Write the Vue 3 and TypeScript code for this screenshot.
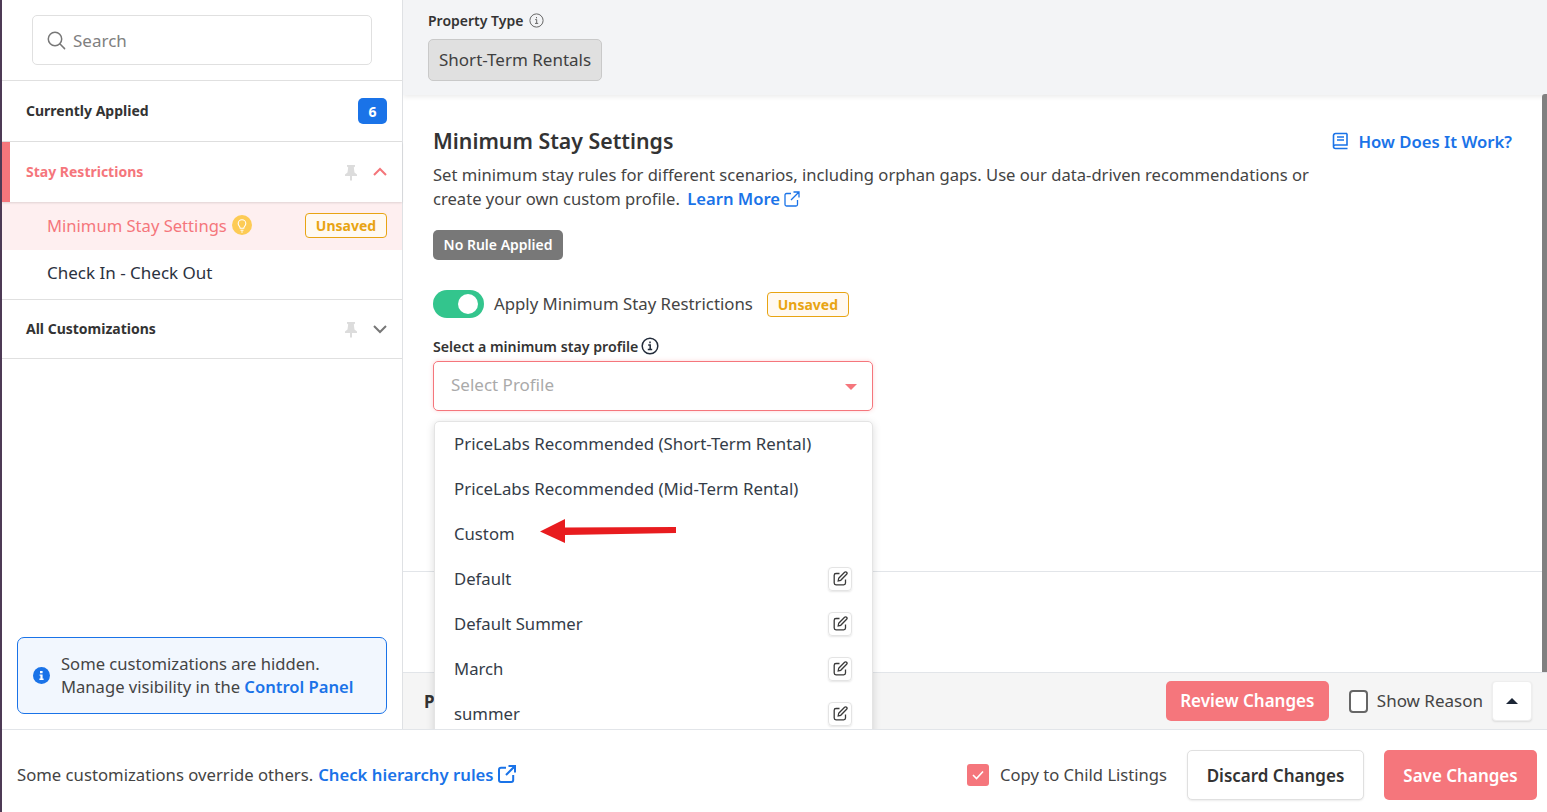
<template>
  <div class="page">
    <div class="top">
      <aside class="sidebar">
        <div class="search-wrap">
          <div class="search">
            <svg width="20" height="20" viewBox="0 0 20 20" fill="none" stroke="#777" stroke-width="1.5"><circle cx="9" cy="9" r="6.7" /><path d="M14 14l4.600 4.600" stroke-linecap="round" /></svg>
            <span>Search</span>
          </div>
        </div>
        <div class="sec applied">
          <span class="sec-title">Currently Applied</span>
          <span class="count">6</span>
        </div>
        <div class="sec stay">
          <span class="sec-title">Stay Restrictions</span>
          <svg class="pin" width="14" height="16" viewBox="0 0 14 16"><path :d="pinPath" fill="#dcdcdc" /></svg>
          <svg class="chev" width="16" height="10" viewBox="0 0 16 10" fill="none" stroke="#f4757a" stroke-width="2"><path d="M2 8l6-6 6 6" /></svg>
        </div>
        <div class="item active">
          <span>Minimum Stay Settings</span>
          <span class="bulb">
            <svg width="14" height="15" viewBox="0 0 14 15" fill="none" stroke="#fff" stroke-width="1.1"><path d="M5.200 10.200c0-1.600-2-2.400-2-4.700a3.800 3.800 0 0 1 7.600 0c0 2.300-2 3.100-2 4.700zM5.500 12.300h3M6.200 14h1.600" /></svg>
          </span>
          <span class="unsaved side">Unsaved</span>
        </div>
        <div class="item check">Check In - Check Out</div>
        <div class="sec all">
          <span class="sec-title">All Customizations</span>
          <svg class="pin" width="14" height="16" viewBox="0 0 14 16"><path :d="pinPath" fill="#dcdcdc" /></svg>
          <svg class="chev" width="16" height="10" viewBox="0 0 16 10" fill="none" stroke="#777" stroke-width="2"><path d="M2 2l6 6 6-6" /></svg>
        </div>
        <div class="spacer"></div>
        <div class="notice">
          <svg width="17" height="17" viewBox="0 0 17 17"><circle cx="8.500" cy="8.500" r="8.500" fill="#1a73e8" /><path d="M7 4h2.600v2.200H7zM6.600 7.400h3v4.200h1v1.400H6.400v-1.400h1v-2.800h-.8z" fill="#fff" /></svg>
          <p>Some customizations are hidden.<br />Manage visibility in the <a>Control Panel</a></p>
        </div>
      </aside>

      <main class="main">
        <div class="prop">
          <div class="prop-label">
            <span>Property Type</span>
            <svg width="15" height="15" viewBox="0 0 15 15" fill="none" stroke="#666"><circle cx="7.500" cy="7.500" r="6.600" /><path d="M6.200 6.600h1.500v3.600M6 10.400h3.200M7.500 4v1.300" /></svg>
          </div>
          <div class="prop-chip">Short-Term Rentals</div>
        </div>

        <div class="content">
          <div class="head">
            <h1>Minimum Stay Settings</h1>
            <a class="how">
              <svg width="17" height="18" viewBox="0 0 17 18" fill="none" stroke="#1a73e8" stroke-width="1.600"><path d="M15 1.500H3.500A2 2 0 0 0 1.500 3.500V14.500A2 2 0 0 0 3.500 16.500H15.500M15 1.500V13H3.500A1.800 1.800 0 0 0 1.500 14.500M5 5h7M5 8h7" /></svg>
              How Does It Work?
            </a>
          </div>
          <p class="desc">
            Set minimum stay rules for different scenarios, including orphan gaps. Use our data-driven recommendations or<br />
            create your own custom profile.&nbsp;<a class="learn">Learn More <svg width="16" height="16" viewBox="0 0 16 16" fill="none" stroke="#1a73e8" stroke-width="1.300"><path d="M7 2.500H2.500A1.500 1.500 0 0 0 1 4v9.500A1.500 1.500 0 0 0 2.500 15H12a1.500 1.500 0 0 0 1.500-1.500V9M9.500 1H15v5.500M15 1L7 9" /></svg></a>
          </p>
          <div class="no-rule">No Rule Applied</div>
          <div class="apply">
            <span class="toggle"><i></i></span>
            <span class="apply-text">Apply Minimum Stay Restrictions</span>
            <span class="unsaved">Unsaved</span>
          </div>
          <div class="select-label">
            Select a minimum stay profile
            <svg width="18" height="18" viewBox="0 0 18 18" fill="none" stroke="#222b3a" stroke-width="1.500"><circle cx="9" cy="9" r="7.800" /><path d="M7.200 8h2v4.400M6.800 12.600h4.400M9 4.500v1.700" /></svg>
          </div>
          <div class="select">
            <span class="placeholder">Select Profile</span>
            <i class="caret"></i>
          </div>
          <div class="divider"></div>
        </div>

        <div class="bar">
          <b class="bar-p">P</b>
          <button class="review">Review Changes</button>
          <label class="reason"><i></i><span>Show Reason</span></label>
          <button class="up"><i></i></button>
        </div>

        <div class="scroll-thumb"></div>

        <ul class="menu">
          <li v-for="opt in options" :key="opt.name">
            <span>{{ opt.name }}</span>
            <span v-if="opt.edit" class="edit">
              <svg width="15" height="15" viewBox="0 0 15 15" fill="none" stroke="#3a3a3a" stroke-width="1.300"><path d="M6.500 2.500H3A1.800 1.800 0 0 0 1.200 4.300V12A1.800 1.800 0 0 0 3 13.800h7.700A1.800 1.800 0 0 0 12.500 12V8.500" /><path d="M5.700 7.200L11.600 1.300a1.200 1.200 0 0 1 2 2L7.700 9.300 5.200 9.800z" /></svg>
            </span>
          </li>
        </ul>

        <svg class="arrow" width="140" height="28" viewBox="0 0 140 28"><path d="M1 13.500L26 1v8.500L137 9v6L26 17v8z" fill="#e81c1f" /></svg>
      </main>
    </div>

    <footer class="footer">
      <p class="note"><span>Some customizations override others.</span><a>Check hierarchy rules</a>
        <svg width="18" height="18" viewBox="0 0 18 18" fill="none" stroke="#1a73e8" stroke-width="2"><path d="M8 2.800H3A2 2 0 0 0 1 4.800V15a2 2 0 0 0 2 2h10.200a2 2 0 0 0 2-2v-5M10.500 1H17v6.500M17 1L8 10" /></svg>
      </p>
      <label class="copy">
        <i><svg width="14" height="12" viewBox="0 0 14 12" fill="none" stroke="#fff" stroke-width="1.600"><path d="M2 6l3.500 3.500L12 2.500" /></svg></i>
        <span>Copy to Child Listings</span>
      </label>
      <button class="discard">Discard Changes</button>
      <button class="save">Save Changes</button>
    </footer>
  </div>
</template>

<script setup lang="ts">
interface ProfileOption {
  name: string
  edit: boolean
}

const pinPath = 'M3 0h8v1.500L9.800 2.500 10.500 7.500 13 9.500V11H8v4l-1 1-1-1v-4H1V9.500l2.500-2L4.200 2.500 3 1.500z'

const options: ProfileOption[] = [
  { name: 'PriceLabs Recommended (Short-Term Rental)', edit: false },
  { name: 'PriceLabs Recommended (Mid-Term Rental)', edit: false },
  { name: 'Custom', edit: false },
  { name: 'Default', edit: true },
  { name: 'Default Summer', edit: true },
  { name: 'March', edit: true },
  { name: 'summer', edit: true }
]
</script>

<style>
html, body {
  margin: 0;
  overflow: hidden;
}
</style>

<style scoped>
.page {
  width: 1547px;
  height: 812px;
  box-sizing: border-box;
  display: flex;
  flex-direction: column;
  font-family: 'Noto Sans', 'Liberation Sans', sans-serif;
  color: #333;
  background: #fff;
  overflow: hidden;
  border-left: 2px solid #c2188b;
  border-image: linear-gradient(90deg, #4d3a55 50%, #c2188b 50%) 1;
}

.top {
  height: 730px;
  flex: none;
  display: flex;
  border-bottom: 1px solid #e2e5e9;
  box-sizing: border-box;
}

.sidebar {
  width: 400px;
  flex: none;
  display: flex;
  flex-direction: column;
  border-right: 1px solid #dfe1e4;
}

.search-wrap {
  padding: 15px 30px 15px 30px;
  border-bottom: 1px solid #e0e0e0;
}

.search {
  height: 48px;
  border: 1px solid #e0e0e0;
  border-radius: 5px;
  display: flex;
  align-items: center;
  gap: 7px;
  padding-left: 13px;
  color: #808080;
  font-size: 17px;
}

.sec {
  display: flex;
  align-items: center;
  padding: 0 15px 0 24px;
  border-bottom: 1px solid #e0e0e0;
}

.sec-title {
  flex: 1;
  font-size: 14px;
  font-weight: 700;
  padding-bottom: 2px;
}

.applied { height: 60px; }

.all {
  height: 58px;
  padding-right: 14px;
}

.stay {
  height: 60px;
  padding-left: 16px;
  padding-right: 14px;
  border-left: 8px solid #f5767c;
  border-bottom: 0;
  color: #f5767c;
  box-shadow: 0 1px 2px rgba(0, 0, 0, 0.12);
  position: relative;
}

.pin {
  margin: 2px 14px 0 0;
}

.item {
  height: 48px;
  box-sizing: border-box;
  padding: 0 15px 2px 45px;
  display: flex;
  align-items: center;
  font-size: 17px;
  color: #2b3240;
}

.check {
  height: 50px;
  padding-bottom: 4px;
  border-bottom: 1px solid #e0e0e0;
}

.active {
  background: #feeff0;
  color: #f5767c;
  font-size: 16.6px;
}

.bulb {
  width: 20px;
  height: 20px;
  margin-left: 5px;
  border-radius: 50%;
  background: #fdcb55;
  display: flex;
  align-items: center;
  justify-content: center;
}

.unsaved {
  width: 82px;
  height: 25px;
  box-sizing: border-box;
  display: inline-flex;
  align-items: center;
  justify-content: center;
  border: 1px solid #e8a413;
  border-radius: 4px;
  background: #fff9f1;
  color: #e8a413;
  font-size: 14px;
  font-weight: 700;
}

.side { margin-left: auto; }

.count {
  width: 29px;
  height: 26px;
  border-radius: 5px;
  background: #1a73e8;
  color: #fff;
  font-size: 14px;
  font-weight: 700;
  display: flex;
  align-items: center;
  justify-content: center;
}

.spacer { flex: 1; }

.notice {
  margin: 0 15px 15px;
  height: 77px;
  box-sizing: border-box;
  border: 1px solid #1a73e8;
  border-radius: 7px;
  background: #f2f7fe;
  display: flex;
  align-items: center;
  gap: 11px;
  padding-left: 15px;
}

.notice p {
  margin: 0;
  padding-bottom: 2px;
  font-size: 16.6px;
  line-height: 23px;
  color: #444;
}

a {
  color: #1a73e8;
  font-weight: 600;
}

.main {
  flex: 1;
  position: relative;
  display: flex;
  flex-direction: column;
  overflow: hidden;
  min-width: 0;
}

.prop {
  height: 95px;
  flex: none;
  box-sizing: border-box;
  padding: 11px 0 0 25px;
  background: #f3f4f6;
  box-shadow: 0 2px 5px rgba(0, 0, 0, 0.08);
  position: relative;
}

.prop-label {
  display: flex;
  align-items: center;
  gap: 6px;
  font-size: 14px;
  font-weight: 600;
  height: 18px;
}

.prop-chip {
  margin-top: 10px;
  width: fit-content;
  height: 42px;
  box-sizing: border-box;
  padding: 0 10px 2px;
  display: flex;
  align-items: center;
  background: #e0e0e0;
  border: 1px solid #c9c9c9;
  border-radius: 5px;
  font-size: 17px;
  color: #3f3f3f;
}

.content {
  flex: 1;
  padding: 31px 0 0 30px;
  min-height: 0;
}

.head {
  display: flex;
  justify-content: space-between;
  align-items: center;
  padding-right: 35px;
}

h1 {
  margin: 0;
  font-size: 21.3px;
  line-height: 30px;
  font-weight: 600;
}

.how {
  display: flex;
  align-items: center;
  gap: 9px;
  font-size: 16.7px;
}

.desc {
  margin: 7px 0 0;
  font-size: 16.6px;
  line-height: 24px;
  color: #444;
}

.desc svg { vertical-align: -2px; }

.learn { margin-left: 3px; }

.no-rule {
  margin-top: 19px;
  width: 130px;
  height: 30px;
  box-sizing: border-box;
  padding-bottom: 2px;
  display: flex;
  align-items: center;
  justify-content: center;
  border-radius: 5px;
  background: #787878;
  color: #fff;
  font-size: 14px;
  font-weight: 600;
}

.apply {
  margin-top: 30px;
  display: flex;
  align-items: center;
}

.toggle {
  width: 51px;
  height: 28px;
  border-radius: 14px;
  background: #33c58d;
  position: relative;
}

.toggle i {
  position: absolute;
  top: 4px;
  right: 6px;
  width: 20px;
  height: 20px;
  border-radius: 50%;
  background: #fff;
}

.apply-text {
  margin: 0 14px 0 10px;
  padding-bottom: 2px;
  font-size: 16.8px;
  color: #444;
}

.select-label {
  margin-top: 19px;
  display: flex;
  align-items: center;
  gap: 3px;
  font-size: 14.2px;
  font-weight: 600;
  height: 18px;
}

.select {
  margin-top: 6px;
  width: 440px;
  height: 50px;
  box-sizing: border-box;
  border: 1px solid #f5767c;
  border-radius: 5px;
  box-shadow: 0 0 4px rgba(245, 118, 124, 0.3);
  display: flex;
  align-items: center;
  justify-content: space-between;
  padding: 0 15px 0 17px;
  color: #aaa;
  font-size: 17px;
}

.placeholder { padding-bottom: 3px; }

.caret {
  width: 0;
  height: 0;
  margin-top: 2px;
  border: 6px solid transparent;
  border-top: 6px solid #f5767c;
  border-bottom: 0;
}

.divider {
  margin: 160px 0 0 -30px;
  border-top: 1px solid #e2e5e9;
}

.bar {
  height: 57px;
  flex: none;
  box-sizing: border-box;
  background: #f5f5f5;
  border-top: 1px solid #e2e5e9;
  display: flex;
  align-items: center;
  padding: 0 15px 0 21px;
}

.bar-p {
  margin-right: auto;
  font-size: 17px;
}

button {
  font-family: inherit;
  cursor: pointer;
}

.review {
  width: 163px;
  height: 40px;
  padding: 0 0 2px;
  border: 0;
  border-radius: 5px;
  background: #f5767c;
  color: #fff;
  font-size: 17px;
  font-weight: 600;
}

.reason {
  margin: 0 9px 0 20px;
  display: flex;
  align-items: center;
  gap: 9px;
  font-size: 17px;
  color: #444;
}

.reason span { padding-bottom: 2px; }

.reason i {
  width: 15px;
  height: 19px;
  border: 2px solid #666;
  border-radius: 4px;
  background: #fff;
}

.up {
  width: 40px;
  height: 40px;
  background: #fff;
  border: 1px solid #eee;
  border-radius: 4px;
  box-shadow: 0 1px 2px rgba(0, 0, 0, 0.1);
  display: flex;
  align-items: center;
  justify-content: center;
  padding: 0;
}

.up i {
  width: 0;
  height: 0;
  border: 6px solid transparent;
  border-bottom: 6px solid #1c2636;
  border-top: 0;
}

.scroll-thumb {
  position: absolute;
  top: 94px;
  right: 0;
  width: 5px;
  height: 578px;
  background: #808080;
  border-top-left-radius: 3px;
}

.menu {
  position: absolute;
  left: 31px;
  top: 421px;
  width: 439px;
  height: 320px;
  box-sizing: border-box;
  margin: 0;
  padding: 0;
  list-style: none;
  background: #fff;
  border: 1px solid #e4e4e4;
  border-radius: 5px;
  box-shadow: 0 2px 8px rgba(0, 0, 0, 0.15);
}

.menu li {
  height: 45px;
  display: flex;
  align-items: center;
  justify-content: space-between;
  padding: 0 20px 2px 19px;
  box-sizing: border-box;
  font-size: 16.7px;
  color: #343c48;
}

.menu li:nth-child(-n + 2) { font-size: 16.85px; }

.edit {
  width: 24px;
  height: 24px;
  box-sizing: border-box;
  border: 1px solid #e4e4e4;
  border-radius: 4px;
  box-shadow: 0 1px 2px rgba(0, 0, 0, 0.1);
  display: flex;
  align-items: center;
  justify-content: center;
}

.arrow {
  position: absolute;
  left: 136px;
  top: 518px;
}

.footer {
  flex: 1;
  display: flex;
  align-items: center;
  padding: 8px 10px 0 17px;
}

.note {
  margin: 0 auto 0 -2px;
  padding-bottom: 2px;
  font-size: 16.7px;
  color: #444;
  display: flex;
  align-items: center;
  gap: 5px;
}

.note svg { margin-left: -1px; }

.copy {
  display: flex;
  align-items: center;
  gap: 11px;
  font-size: 16.6px;
  color: #444;
}

.copy span { padding-bottom: 2px; }

.copy i {
  width: 22px;
  height: 22px;
  border-radius: 3px;
  background: #f5767c;
  display: flex;
  align-items: center;
  justify-content: center;
}

.discard {
  margin: 0 20px;
  width: 177px;
  height: 50px;
  background: #fff;
  border: 1px solid #e0e0e0;
  border-radius: 5px;
  box-shadow: 0 1px 2px rgba(0, 0, 0, 0.08);
  color: #333;
  font-size: 17px;
  font-weight: 600;
}

.save {
  width: 153px;
  height: 50px;
  border: 0;
  border-radius: 5px;
  background: #f5767c;
  color: #fff;
  font-size: 17px;
  font-weight: 600;
}
</style>
